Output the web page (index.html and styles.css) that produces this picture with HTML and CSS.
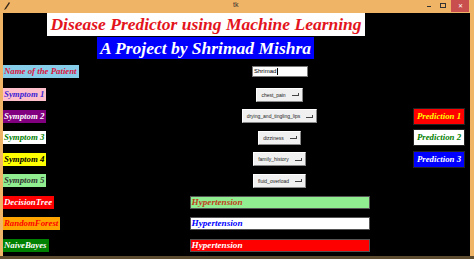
FILE: index.html
```html
<!DOCTYPE html>
<html lang="en">
  <head>
    <meta charset="UTF-8" />
    <title>tk</title>
    <link rel="stylesheet" href="styles.css">
  </head>
  <body>
    <div class="window">
      <div class="titlebar">
        <svg class="tk-icon" width="6" height="8" viewBox="0 0 6 8">
          <path d="M5 0 L1 6 L0 8 L2 7 L6 1 Z" fill="#3a2a1a" />
        </svg>
        <span class="tk-title">tk</span>
        <div class="controls">
          <span class="ctl min"></span>
          <span class="ctl max"></span>
          <span class="ctl close">&#x2715;</span>
        </div>
      </div>

      <div class="client">
        <div class="heading">
          <span class="h-main">Disease Predictor using Machine Learning</span>
        </div>
        <div class="heading">
          <span class="h-sub">A Project by Shrimad Mishra</span>
        </div>

        <div class="row row-name">
          <div class="cell"><span class="lbl lbl-name">Name of the Patient</span></div>
          <div class="cell mid">
            <div class="entry">Shrimad<span class="caret"></span></div>
          </div>
          <div class="cell right"></div>
        </div>

        <div class="row">
          <div class="cell"><span class="lbl lbl-s1">Symptom 1</span></div>
          <div class="cell mid"><div class="option">chest_pain<span class="ind"></span></div></div>
          <div class="cell right"></div>
        </div>

        <div class="row">
          <div class="cell"><span class="lbl lbl-s2">Symptom 2</span></div>
          <div class="cell mid"><div class="option">drying_and_tingling_lips<span class="ind"></span></div></div>
          <div class="cell right"><span class="pred pred-1">Prediction 1</span></div>
        </div>

        <div class="row">
          <div class="cell"><span class="lbl lbl-s3">Symptom 3</span></div>
          <div class="cell mid"><div class="option">dizziness<span class="ind"></span></div></div>
          <div class="cell right"><span class="pred pred-2">Prediction 2</span></div>
        </div>

        <div class="row">
          <div class="cell"><span class="lbl lbl-s4">Symptom 4</span></div>
          <div class="cell mid"><div class="option">family_history<span class="ind"></span></div></div>
          <div class="cell right"><span class="pred pred-3">Prediction 3</span></div>
        </div>

        <div class="row">
          <div class="cell"><span class="lbl lbl-s5">Symptom 5</span></div>
          <div class="cell mid"><div class="option">fluid_overload<span class="ind"></span></div></div>
          <div class="cell right"></div>
        </div>

        <div class="row">
          <div class="cell"><span class="lbl lbl-dt">DecisionTree</span></div>
          <div class="cell mid"><div class="result res-dt">Hypertension</div></div>
          <div class="cell right"></div>
        </div>

        <div class="row">
          <div class="cell"><span class="lbl lbl-rf">RandomForest</span></div>
          <div class="cell mid"><div class="result res-rf">Hypertension</div></div>
          <div class="cell right"></div>
        </div>

        <div class="row">
          <div class="cell"><span class="lbl lbl-nb">NaiveBayes</span></div>
          <div class="cell mid"><div class="result res-nb">Hypertension</div></div>
          <div class="cell right"></div>
        </div>
      </div>
      <div class="bottom-edge"></div>
    </div>
  </body>
</html>
```

FILE: styles.css
```css
body {
  margin: 0;
  background: #f0b466;
  overflow: hidden;
}

.window {
  width: 474px;
  height: 259px;
  display: flex;
  flex-direction: column;
  background: #f0b466;
}

.titlebar {
  height: 13px;
  position: relative;
  font-family: "Liberation Sans", sans-serif;
}

.tk-icon {
  position: absolute;
  left: 4px;
  top: 2px;
}

.tk-title {
  position: absolute;
  left: 233px;
  top: 1px;
  font-size: 7px;
  color: #333;
}

.controls {
  position: absolute;
  right: 5px;
  top: 0;
  display: flex;
  align-items: flex-start;
  gap: 4px;
}

.ctl {
  display: block;
  width: 9px;
  height: 10px;
  position: relative;
}

.ctl.min::after {
  content: "";
  position: absolute;
  left: 2px;
  top: 6px;
  width: 4px;
  height: 1px;
  background: #333;
}

.ctl.max::after {
  content: "";
  position: absolute;
  left: 2px;
  top: 3px;
  width: 4px;
  height: 3px;
  border: 1px solid #333;
}

.ctl.close {
  width: 18px;
  height: 12px;
  background: #c94f4f;
  color: #fff;
  font-size: 6px;
  line-height: 12px;
  text-align: center;
}

.client {
  margin: 0 4px 0 3px;
  height: 243px;
  background: #000;
  font-family: "Liberation Serif", "Times New Roman", serif;
  font-weight: bold;
  font-style: italic;
}

.bottom-edge {
  flex: 1;
  background: #5e4c30;
}

.heading {
  display: flex;
}

.h-main {
  margin-left: 44px;
  width: 318px;
  height: 23px;
  background: #fff;
  color: #e3141c;
  font-size: 17.5px;
  line-height: 23px;
  text-align: center;
  white-space: nowrap;
}

.h-sub {
  margin: 1px 0 0 94px;
  width: 217px;
  height: 22px;
  background: #0000ff;
  color: #fff;
  font-size: 17.5px;
  line-height: 22px;
  text-align: center;
  white-space: nowrap;
}

.row {
  display: grid;
  grid-template-columns: 184px 185px 1fr;
  height: 21.5px;
}

.row-name {
  height: 25px;
}

.cell {
  display: flex;
  align-items: center;
}

.cell.mid {
  justify-content: center;
}

.cell.right {
  justify-content: flex-end;
  padding-right: 5px;
}

.lbl {
  font-size: 8.8px;
  line-height: 13px;
  height: 13px;
  padding: 0 2px 0 1px;
  white-space: nowrap;
}

.lbl-name { background: #87ceeb; color: #dc143c; }
.lbl-s1 { background: #ffc0cb; color: #3b1fd6; }
.lbl-s2 { background: #800080; color: #fff; }
.lbl-s3 { background: #fff; color: #008000; }
.lbl-s4 { background: #ffff00; color: #000; }
.lbl-s5 { background: #90ee90; color: #333; }
.lbl-dt { background: #ff0000; color: #fff; }
.lbl-rf { background: #ffa500; color: #ff0000; }
.lbl-nb { background: #008000; color: #fff; }

.entry {
  width: 53px;
  height: 9px;
  margin-left: 1px;
  background: #fff;
  border: 1px solid #777;
  font-family: "Liberation Sans", sans-serif;
  font-style: normal;
  font-weight: normal;
  font-size: 6px;
  line-height: 9px;
  padding-left: 1px;
  color: #000;
  display: flex;
  align-items: center;
}

.caret {
  width: 1px;
  height: 7px;
  background: #000;
  margin-left: 1px;
}

.option {
  display: flex;
  align-items: center;
  height: 12px;
  padding: 0 3px 0 4px;
  background: #f0f0f0;
  border: 1px solid;
  border-color: #fff #888 #888 #fff;
  font-family: "Liberation Sans", sans-serif;
  font-style: normal;
  font-weight: normal;
  font-size: 5px;
  color: #222;
  white-space: nowrap;
}

.ind {
  width: 6px;
  height: 2px;
  margin-left: 6px;
  border-bottom: 1px solid #444;
  border-right: 1px solid #444;
}

.result {
  width: 177px;
  height: 11px;
  border: 1px solid #555;
  font-size: 9.2px;
  line-height: 11px;
  padding-left: 1px;
  box-sizing: content-box;
}

.res-dt { background: #90ee90; color: #c0401a; }
.res-rf { background: #fff; color: #0000ff; }
.res-nb { background: #ff0000; color: #fff; }

.pred {
  width: 50px;
  height: 15px;
  border: 1px solid #222;
  font-size: 8.8px;
  line-height: 15px;
  text-align: center;
  white-space: nowrap;
}

.pred-1 { background: #ff0000; color: #ffff00; }
.pred-2 { background: #fff; color: #008000; }
.pred-3 { background: #0000ff; color: #fff; }
```
